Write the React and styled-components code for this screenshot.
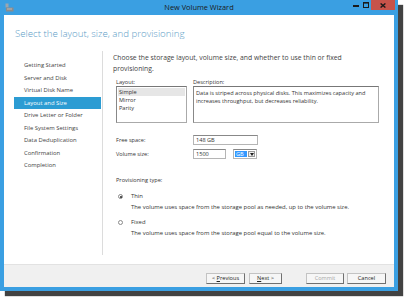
import React from "react";
import styled, { createGlobalStyle } from "styled-components";

const GlobalStyle = createGlobalStyle`
  html, body { margin: 0; padding: 0; background: #fff; }
  body { font-family: "Open Sans", "Noto Sans", sans-serif; color: #333; }
  * { box-sizing: border-box; }
`;

const Page = styled.div`
  width: 404px;
  height: 297px;
  overflow: hidden;
`;

const Window = styled.div`
  width: 398px;
  height: 291px;
  background: #3a9fe2;
  box-shadow: 5px 5px 1px rgba(45, 45, 45, 0.9);
  display: flex;
  flex-direction: column;
`;

const TitleBar = styled.div`
  height: 15px;
  display: grid;
  grid-template-columns: 1fr auto 1fr;
  align-items: start;
`;

const TitleIcon = styled.div`
  padding: 3px 0 0 5px;
  display: flex;
`;

const TitleText = styled.div`
  font-size: 7.4px;
  line-height: 15px;
  color: #1a1a1a;
`;

const Controls = styled.div`
  justify-self: end;
  display: flex;
  align-items: flex-start;
  padding-right: 3px;
`;

const CtrlButton = styled.div`
  width: ${(p) => p.$w}px;
  height: 10px;
  display: flex;
  align-items: center;
  justify-content: center;
  background: ${(p) => (p.$close ? "#c7534a" : "transparent")};
`;

const Frame = styled.div`
  flex: 1;
  padding: 0 4px 4px 4px;
  display: flex;
`;

const Inner = styled.div`
  flex: 1;
  background: #fff;
  display: flex;
  flex-direction: column;
`;

const Heading = styled.h1`
  margin: 0;
  padding: 11px 0 0 11px;
  height: 36px;
  font-size: 9.7px;
  font-weight: 300;
  line-height: 16px;
  color: #5b9cc6;
`;

const Main = styled.div`
  flex: 1;
  display: flex;
  padding-bottom: 9px;
`;

const Nav = styled.ul`
  width: 99px;
  margin: 0;
  padding: 8px 1px 0 10px;
  list-style: none;
  border-right: 1px solid #dcdcdc;
`;

const NavItem = styled.li`
  height: 12.5px;
  line-height: 12.5px;
  padding-left: 10px;
  font-size: 5.9px;
  color: ${(p) => (p.$active ? "#fff" : "#444")};
  background: ${(p) => (p.$active ? "#2c9cd3" : "transparent")};
`;

const Content = styled.div`
  flex: 1;
  padding: 1px 10px 0 10px;
  display: flex;
  flex-direction: column;
`;

const Intro = styled.p`
  margin: 0;
  font-size: 6.8px;
  line-height: 11px;
  color: #444;
`;

const Section = styled.div`
  padding-left: 3px;
  display: flex;
  flex-direction: column;
`;

const Small = styled.div`
  font-size: 5.6px;
  line-height: ${(p) => p.$lh || 8}px;
  color: ${(p) => p.$color || "#333"};
`;

const BoxRow = styled.div`
  margin-top: ${(p) => (p.$flush ? 0 : 4)}px;
  display: grid;
  grid-template-columns: 71px 186px;
  column-gap: 6px;
`;

const Sunken = styled.div`
  height: 37px;
  border: 1px solid #aaa;
  border-top-color: #777;
  border-left-color: #888;
  background: #fff;
  padding: ${(p) => p.$pad || "1px"};
`;

const ListItem = styled.div`
  font-size: 5.6px;
  line-height: 8px;
  padding-left: 1px;
  background: ${(p) => (p.$selected ? "#e6e6e6" : "transparent")};
`;

const FieldGrid = styled.div`
  margin-top: 12px;
  display: grid;
  grid-template-columns: 77px auto;
  row-gap: 4px;
  align-items: center;
`;

const FieldLine = styled.div`
  display: flex;
  align-items: center;
  gap: 7px;
`;

const TextBox = styled.div`
  width: ${(p) => p.$w}px;
  height: 10px;
  border: 1px solid #b5b5b5;
  border-top-color: #888;
  font-size: 5.6px;
  line-height: 8px;
  padding-left: 2px;
  background: #fff;
`;

const Select = styled.div`
  width: 24px;
  height: 10px;
  border: 1px solid #b5b5b5;
  border-top-color: #888;
  display: flex;
  padding: 1px;
  background: #fff;
`;

const SelectValue = styled.div`
  flex: 1;
  background: #3399ff;
  color: #fff;
  font-size: 5.6px;
  line-height: 6px;
  padding-left: 1px;
`;

const SelectArrow = styled.div`
  width: 7px;
  margin-left: 1px;
  background: #eee;
  border: 1px solid #999;
  display: flex;
  align-items: center;
  justify-content: center;
`;

const ProvTitle = styled(Small)`
  margin-top: 17px;
`;

const Option = styled.div`
  margin-top: ${(p) => p.$mt}px;
  display: grid;
  grid-template-columns: 15px auto;
  align-items: center;
`;

const Radio = styled.span`
  width: 5px;
  height: 5px;
  margin-left: 2px;
  border-radius: 50%;
  border: 1px solid #8a8a8a;
  background: #fff;
  display: flex;
  align-items: center;
  justify-content: center;
  &::after {
    content: "";
    width: 2px;
    height: 2px;
    border-radius: 50%;
    background: ${(p) => (p.$checked ? "#222" : "transparent")};
  }
`;

const OptionText = styled.div`
  grid-column: 2;
  font-size: 5.9px;
  line-height: 11px;
  color: #333;
`;

const Footer = styled.div`
  height: 23px;
  background: #f0f0f0;
  border-top: 1px solid #e2e2e2;
  display: flex;
  justify-content: flex-end;
  align-items: flex-start;
  padding: 8px 8px 0 0;
`;

const Button = styled.div`
  width: ${(p) => p.$w || 39}px;
  height: 11px;
  margin-left: ${(p) => p.$gap || 0}px;
  border: 1px solid #c3c3c3;
  border-right-color: #707070;
  border-bottom-color: #707070;
  background: #f6f6f6;
  font-size: 5.6px;
  line-height: 9px;
  text-align: center;
  color: ${(p) => (p.$disabled ? "#a6a6a6" : "#222")};
  u { text-decoration: underline; }
`;

const navItems = [
  "Getting Started",
  "Server and Disk",
  "Virtual Disk Name",
  "Layout and Size",
  "Drive Letter or Folder",
  "File System Settings",
  "Data Deduplication",
  "Confirmation",
  "Completion",
];

export default function App() {
  return (
    <Page>
      <GlobalStyle />
      <Window>
        <TitleBar>
          <TitleIcon>
            <svg width="9" height="9" viewBox="0 0 9 9">
              <rect x="0.5" y="0.5" width="3" height="4" fill="#9aa6b0" />
              <rect x="1" y="4.5" width="7.5" height="4" fill="#8c8c8c" />
              <rect x="2" y="5.5" width="5" height="1" fill="#b8b8b8" />
            </svg>
          </TitleIcon>
          <TitleText>New Volume Wizard</TitleText>
          <Controls>
            <CtrlButton $w={10}>
              <svg width="6" height="3" viewBox="0 0 6 3">
                <rect x="0" y="1" width="6" height="2" fill="#1a1a1a" />
              </svg>
            </CtrlButton>
            <CtrlButton $w={10}>
              <svg width="6" height="6" viewBox="0 0 6 6">
                <rect x="0.5" y="0.5" width="5" height="5" fill="none" stroke="#1a1a1a" />
                <rect x="0" y="0" width="6" height="1.6" fill="#1a1a1a" />
              </svg>
            </CtrlButton>
            <CtrlButton $w={24} $close>
              <svg width="6" height="5" viewBox="0 0 6 5">
                <path d="M0.6 0.4 L5.4 4.6 M5.4 0.4 L0.6 4.6" stroke="#1a1a1a" strokeWidth="1.3" />
              </svg>
            </CtrlButton>
          </Controls>
        </TitleBar>
        <Frame>
          <Inner>
            <Heading>Select the layout, size, and provisioning</Heading>
            <Main>
              <Nav>
                {navItems.map((item) => (
                  <NavItem key={item} $active={item === "Layout and Size"}>
                    {item}
                  </NavItem>
                ))}
              </Nav>
              <Content>
                <Intro>
                  Choose the storage layout, volume size, and whether to use thin or fixed
                  provisioning.
                </Intro>
                <Section>
                  <BoxRow>
                    <Small>Layout:</Small>
                    <Small>Description:</Small>
                  </BoxRow>
                  <BoxRow $flush>
                    <Sunken>
                      <ListItem $selected>Simple</ListItem>
                      <ListItem>Mirror</ListItem>
                      <ListItem>Parity</ListItem>
                    </Sunken>
                    <Sunken $pad="2px 2px">
                      <Small>
                        Data is striped across physical disks. This maximizes capacity and
                        increases throughput, but decreases reliability.
                      </Small>
                    </Sunken>
                  </BoxRow>
                  <FieldGrid>
                    <Small>Free space:</Small>
                    <TextBox $w={65}>148 GB</TextBox>
                    <Small>Volume size:</Small>
                    <FieldLine>
                      <TextBox $w={33}>1500</TextBox>
                      <Select>
                        <SelectValue>GB</SelectValue>
                        <SelectArrow>
                          <svg width="4" height="3" viewBox="0 0 4 3">
                            <path d="M0 0 H4 L2 3 Z" fill="#222" />
                          </svg>
                        </SelectArrow>
                      </Select>
                    </FieldLine>
                  </FieldGrid>
                  <ProvTitle>Provisioning type:</ProvTitle>
                  <Option $mt={7}>
                    <Radio $checked />
                    <OptionText>Thin</OptionText>
                    <OptionText>
                      The volume uses space from the storage pool as needed, up to the volume size.
                    </OptionText>
                  </Option>
                  <Option $mt={4}>
                    <Radio />
                    <OptionText>Fixed</OptionText>
                    <OptionText>
                      The volume uses space from the storage pool equal to the volume size.
                    </OptionText>
                  </Option>
                </Section>
              </Content>
            </Main>
            <Footer>
              <Button>
                &lt; <u>P</u>revious
              </Button>
              <Button $gap={4} $w={33}>
                <u>N</u>ext &gt;
              </Button>
              <Button $gap={24} $w={38} $disabled>
                Commit
              </Button>
              <Button $gap={3}>Cancel</Button>
            </Footer>
          </Inner>
        </Frame>
      </Window>
    </Page>
  );
}
